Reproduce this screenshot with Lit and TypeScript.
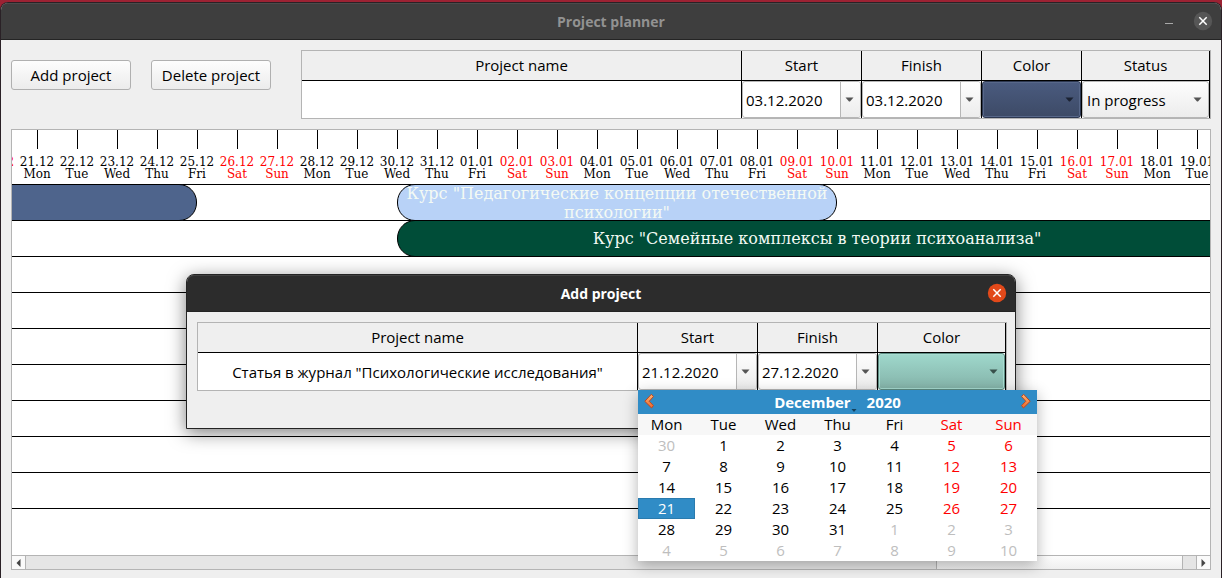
import { LitElement, html, css, nothing } from "lit";
import { customElement, property } from "lit/decorators.js";
import { classMap } from "lit/directives/class-map.js";

const controls = css`
  * {
    box-sizing: border-box;
  }
  button,
  input,
  select {
    font: inherit;
    color: inherit;
    margin: 0;
    padding: 0;
    border: 0;
    border-radius: 0;
    background: none;
    appearance: none;
    outline: none;
  }
`;

const caret = html`<svg class="caret" width="9" height="5" viewBox="0 0 9 5" aria-hidden="true">
  <path d="M0.5 0.5h8L5 4.6H4z" fill="currentColor" />
</svg>`;

const cross = html`<svg width="20" height="20" viewBox="0 0 20 20" aria-hidden="true">
  <circle class="disc" cx="10" cy="10" r="9.2" />
  <path d="M6.3 6.3l7.4 7.4M13.7 6.3l-7.4 7.4" stroke="#fff" stroke-width="1.5" />
</svg>`;

@customElement("month-popup")
export class MonthPopup extends LitElement {
  @property({ type: Number }) selected = 21;

  static styles = [
    controls,
    css`
      :host {
        display: block;
        width: 399px;
        background: #fff;
        box-shadow: 0 4px 14px rgba(0, 0, 0, 0.3);
        color: #000;
      }
      .nav {
        height: 24px;
        display: flex;
        align-items: center;
        justify-content: space-between;
        padding: 0 5px;
        background: #308cc6;
        color: #fff;
        font-weight: 700;
      }
      .step {
        display: flex;
      }
      .heading {
        display: flex;
        gap: 10px;
      }
      .month {
        display: flex;
        align-items: flex-end;
      }
      .mark {
        color: #15405c;
      }
      .days {
        width: 100%;
        table-layout: fixed;
        border-collapse: collapse;
      }
      th,
      td {
        height: 21px;
        padding: 0;
        text-align: center;
        font-weight: 400;
        line-height: 21px;
      }
      th {
        background: #f7f7f7;
      }
      .day {
        display: block;
        width: 100%;
        height: 21px;
        line-height: 21px;
      }
      .weekend {
        color: #f00;
      }
      .outside {
        color: #bebebe;
      }
      .picked {
        background: #308cc6;
        color: #fff;
        border: 1px solid #2a7bae;
        line-height: 19px;
      }
    `,
  ];

  render() {
    const names = ["Mon", "Tue", "Wed", "Thu", "Fri", "Sat", "Sun"];
    const first = new Date(2020, 10, 30);
    const weeks = Array.from({ length: 6 }, (_, w) =>
      names.map((_n, d) => new Date(first.getFullYear(), first.getMonth(), first.getDate() + w * 7 + d))
    );
    const chevron = (d: string) => html`<svg width="12" height="18" viewBox="0 0 12 18" aria-hidden="true">
      <defs>
        <linearGradient id="amber" x1="0" y1="0" x2="0" y2="1">
          <stop offset="0" stop-color="#fbb777" />
          <stop offset="1" stop-color="#f0672a" />
        </linearGradient>
      </defs>
      <path d=${d} fill="url(#amber)" stroke="#c4461a" stroke-width="1" stroke-linejoin="round" />
    </svg>`;
    return html`
      <div class="nav">
        <button class="step" aria-label="Previous month">
          ${chevron("M8.4 1.3L10.4 3.6L6.2 8.3L10.4 12.6L8.6 15L1.8 8.3Z")}
        </button>
        <div class="heading">
          <button class="month">
            December<svg class="mark" width="6" height="3" viewBox="0 0 6 3" aria-hidden="true">
              <path d="M0.5 0h5L3 3z" fill="currentColor" />
            </svg>
          </button>
          <button>2020</button>
        </div>
        <button class="step" aria-label="Next month">
          ${chevron("M3.6 1.3L1.6 3.6L5.8 8.3L1.6 12.6L3.4 15L10.2 8.3Z")}
        </button>
      </div>
      <table class="days">
        <thead>
          <tr>
            ${names.map((n, i) => html`<th class=${i > 4 ? "weekend" : nothing}>${n}</th>`)}
          </tr>
        </thead>
        <tbody>
          ${weeks.map(
            (week) => html`<tr>
              ${week.map((date, i) => {
                const outside = date.getMonth() !== 11;
                return html`<td>
                  <button
                    class=${classMap({
                      day: true,
                      outside,
                      weekend: !outside && i > 4,
                      picked: !outside && date.getDate() === this.selected,
                    })}
                  >
                    ${date.getDate()}
                  </button>
                </td>`;
              })}
            </tr>`
          )}
        </tbody>
      </table>
    `;
  }
}

@customElement("project-form")
export class ProjectForm extends LitElement {
  @property() name = "";
  @property() start = "";
  @property() finish = "";
  @property() tone = "navy";
  @property() status = "";
  @property({ type: Boolean }) open = false;

  static styles = [
    controls,
    css`
      :host {
        display: block;
        border: 1px solid #b4b4b4;
        background: #efefef;
      }
      .grid {
        width: 100%;
        table-layout: fixed;
        border-collapse: separate;
        border-spacing: 0;
      }
      th,
      td {
        padding: 0;
        border-right: 1px solid #000;
      }
      th {
        height: 30px;
        padding-bottom: 2px;
        border-bottom: 1px solid #000;
        font-weight: 400;
        text-align: center;
      }
      td {
        position: relative;
        height: 37px;
        background: #fff;
      }
      .date {
        width: 120px;
      }
      .tint {
        width: 100px;
      }
      .last {
        width: 128px;
      }
      .name {
        display: block;
        width: 100%;
        height: 37px;
        text-align: center;
      }
      .picker,
      .choice {
        display: flex;
        height: 37px;
        border: 1px solid #b6b6b6;
        border-radius: 3px;
        overflow: hidden;
      }
      .value {
        flex: 1;
        min-width: 0;
        padding-left: 3px;
      }
      .drop {
        display: flex;
        align-items: center;
        justify-content: center;
        width: 20px;
        padding-right: 2px;
        border-left: 1px solid #b6b6b6;
        background: linear-gradient(#fdfdfd, #ececec);
        color: #555;
      }
      .choice {
        position: relative;
        align-items: center;
        background: linear-gradient(#fdfdfd, #ececec);
        color: #000;
      }
      .choice .caret {
        position: absolute;
        right: 6px;
        color: #555;
        pointer-events: none;
      }
      .list {
        width: 100%;
        height: 100%;
        padding-left: 4px;
      }
      .navy {
        background: linear-gradient(#4a5b7f, #3d4a66);
        border-color: #2c3750;
        box-shadow: inset 0 0 0 1px #576789;
      }
      .mint {
        background: linear-gradient(#9fd8cc, #84b3a9);
        border-color: #5d8c82;
        box-shadow: inset 0 0 0 1px #a8dcd1;
      }
      .navy .caret {
        color: #1b2232;
      }
      .mint .caret {
        color: #38504b;
      }
      month-popup {
        position: absolute;
        left: 0;
        top: 37px;
        z-index: 2;
      }
    `,
  ];

  private picker(label: string, value: string) {
    return html`<div class="picker">
      <input class="value" aria-label=${label} .value=${value} />
      <button class="drop" aria-label=${`Open ${label.toLowerCase()} calendar`}>${caret}</button>
    </div>`;
  }

  render() {
    return html`
      <table class="grid">
        <thead>
          <tr>
            <th>Project name</th>
            <th class="date">Start</th>
            <th class="date">Finish</th>
            <th class=${this.status ? "tint" : "last"}>Color</th>
            ${this.status ? html`<th class="last">Status</th>` : nothing}
          </tr>
        </thead>
        <tbody>
          <tr>
            <td><input class="name" aria-label="Project name" .value=${this.name} /></td>
            <td>
              ${this.picker("Start", this.start)} ${this.open ? html`<month-popup></month-popup>` : nothing}
            </td>
            <td>${this.picker("Finish", this.finish)}</td>
            <td>
              <div class="choice ${this.tone}">
                <select class="list" aria-label="Color">
                  <option></option>
                </select>
                ${caret}
              </div>
            </td>
            ${this.status
              ? html`<td>
                  <div class="choice">
                    <select class="list" aria-label="Status">
                      <option>${this.status}</option>
                    </select>
                    ${caret}
                  </div>
                </td>`
              : nothing}
          </tr>
        </tbody>
      </table>
    `;
  }
}

interface Bar {
  from: number;
  to: number;
  tone: string;
  title: string;
}

@customElement("project-timeline")
export class ProjectTimeline extends LitElement {
  static styles = [
    controls,
    css`
      :host {
        display: flex;
        flex-direction: column;
        border: 1px solid #b4b4b4;
        background: #fff;
        font-family: "DejaVu Serif", serif;
      }
      .canvas {
        flex: 1;
        overflow: hidden;
      }
      .scale {
        display: flex;
        height: 54px;
        margin-left: -75px;
      }
      .tick {
        flex: none;
        width: 40px;
        font-size: 12px;
        line-height: 12px;
        text-align: center;
        white-space: nowrap;
      }
      .tick::before {
        content: "";
        display: block;
        width: 1px;
        height: 19px;
        margin: 0 0 7px 20px;
        background: #000;
      }
      .weekend {
        color: #f00;
      }
      .lane {
        height: 36px;
        border-top: 1px solid #000;
      }
      .track {
        display: grid;
        grid-auto-columns: 40px;
        grid-auto-flow: column;
        height: 37px;
        margin: -1px 0 0 -55px;
      }
      .bar {
        display: flex;
        align-items: center;
        justify-content: center;
        grid-row: 1;
        height: 37px;
        border: 1px solid #000;
        border-radius: 18px;
        color: #f4faf4;
        font-size: 16px;
        line-height: 19px;
        text-align: center;
      }
      .slate {
        background: #4e648c;
      }
      .sky {
        background: #b8d2f7;
      }
      .forest {
        background: #004d38;
      }
      .scroll {
        display: flex;
        height: 14px;
        border-top: 1px solid #b4b4b4;
        background: #e5e5e5;
      }
      .arrow {
        display: flex;
        align-items: center;
        justify-content: center;
        width: 14px;
        background: #fafafa;
        color: #444;
      }
      .back {
        border-right: 1px solid #b4b4b4;
      }
      .forward {
        border-left: 1px solid #b4b4b4;
      }
      .rail {
        flex: 1;
        display: flex;
        justify-content: flex-end;
        padding-right: 13px;
      }
      .thumb {
        width: 247px;
        border: solid #b4b4b4;
        border-width: 0 1px;
        background: linear-gradient(#fcfcfc, #efefef);
      }
    `,
  ];

  private lanes: Bar[][] = [
    [
      { from: 1, to: 7, tone: "slate", title: "" },
      { from: 12, to: 23, tone: "sky", title: 'Курс "Педагогические концепции отечественной психологии"' },
    ],
    [{ from: 12, to: 33, tone: "forest", title: 'Курс "Семейные комплексы в теории психоанализа"' }],
    ...Array.from({ length: 8 }, () => [] as Bar[]),
  ];

  render() {
    const names = ["Sun", "Mon", "Tue", "Wed", "Thu", "Fri", "Sat"];
    const two = (n: number) => String(n).padStart(2, "0");
    const days = Array.from({ length: 32 }, (_, i) => new Date(2020, 11, 19 + i));
    return html`
      <div class="canvas">
        <div class="scale">
          ${days.map((d) => {
            const weekend = d.getDay() === 0 || d.getDay() === 6;
            return html`<div class=${classMap({ tick: true, weekend })}>
              ${two(d.getDate())}.${two(d.getMonth() + 1)}<br />${names[d.getDay()]}
            </div>`;
          })}
        </div>
        ${this.lanes.map(
          (bars) => html`<div class="lane">
            ${bars.length
              ? html`<div class="track">
                  ${bars.map(
                    (b) =>
                      html`<div class="bar ${b.tone}" style="grid-column: ${b.from} / ${b.to}">${b.title}</div>`
                  )}
                </div>`
              : nothing}
          </div>`
        )}
      </div>
      <div class="scroll">
        <button class="arrow back" aria-label="Scroll left">
          <svg width="5" height="8" viewBox="0 0 5 8"><path d="M4.5 0v8L0.5 4z" fill="currentColor" /></svg>
        </button>
        <div class="rail"><div class="thumb"></div></div>
        <button class="arrow forward" aria-label="Scroll right">
          <svg width="5" height="8" viewBox="0 0 5 8"><path d="M0.5 0v8L4.5 4z" fill="currentColor" /></svg>
        </button>
      </div>
    `;
  }
}

@customElement("app-root")
export class AppRoot extends LitElement {
  static styles = [
    controls,
    css`
      :host {
        display: flex;
        min-height: 100vh;
        box-sizing: border-box;
        padding-top: 2px;
        background: #9c2233;
        color: #000;
        font: 15px/20px "Open Sans", "Noto Sans", sans-serif;
        overflow: hidden;
      }
      .window {
        flex: 1;
        min-width: 0;
        display: flex;
        flex-direction: column;
        border: 1px solid #2a2126;
        border-bottom: 0;
        border-radius: 8px 8px 0 0;
        background: #efefef;
        overflow: hidden;
      }
      .titlebar {
        display: grid;
        grid-template-columns: 1fr auto 1fr;
        align-items: center;
        height: 37px;
        padding: 0 8px;
        border-bottom: 1px solid #242424;
        background: #3e3e3e;
        box-shadow: inset 0 1px #4b4b4b;
        color: #929292;
        font-size: 14px;
        font-weight: 700;
      }
      .caption {
        grid-column: 2;
        padding-top: 2px;
      }
      .actions {
        display: flex;
        justify-content: flex-end;
        gap: 14px;
      }
      .action {
        display: flex;
      }
      .disc {
        fill: #565656;
      }
      .body {
        flex: 1;
        display: flex;
        flex-direction: column;
        gap: 10px;
        padding: 10px 10px 8px;
      }
      .tools {
        display: flex;
        align-items: flex-start;
        gap: 30px;
      }
      .buttons {
        display: flex;
        gap: 20px;
        padding-top: 10px;
      }
      .push {
        width: 120px;
        height: 30px;
        border: 1px solid #b0b0b0;
        border-radius: 3px;
        background: linear-gradient(#fdfdfd, #ececec);
        white-space: nowrap;
      }
      .current,
      project-timeline {
        flex: 1;
      }
      .dialog {
        position: absolute;
        left: 186px;
        top: 274px;
        width: 830px;
        height: 155px;
        border: 1px solid #242424;
        border-radius: 8px 8px 0 0;
        background: #efefef;
        box-shadow: 0 4px 18px rgba(0, 0, 0, 0.5);
      }
      .dialog .titlebar {
        border-radius: 7px 7px 0 0;
        background: #2c2c2c;
        box-shadow: inset 0 1px #404040;
        color: #fff;
      }
      .dialog .disc {
        fill: #e2491a;
      }
      .fields {
        padding: 10px 8px 0 10px;
      }
    `,
  ];

  render() {
    return html`
      <main class="window">
        <header class="titlebar">
          <span class="caption">Project planner</span>
          <div class="actions">
            <button class="action" aria-label="Minimize">
              <svg width="20" height="20" viewBox="0 0 20 20"><path d="M6 12.5h8" stroke="#a8a8a8" /></svg>
            </button>
            <button class="action" aria-label="Close window">${cross}</button>
          </div>
        </header>
        <section class="body">
          <div class="tools">
            <div class="buttons">
              <button class="push">Add project</button>
              <button class="push">Delete project</button>
            </div>
            <project-form class="current" start="03.12.2020" finish="03.12.2020" status="In progress"></project-form>
          </div>
          <project-timeline></project-timeline>
        </section>
      </main>
      <div class="dialog" role="dialog" aria-label="Add project">
        <header class="titlebar">
          <span class="caption">Add project</span>
          <div class="actions"><button class="action" aria-label="Close dialog">${cross}</button></div>
        </header>
        <div class="fields">
          <project-form
            name='Статья в журнал "Психологические исследования"'
            start="21.12.2020"
            finish="27.12.2020"
            tone="mint"
            open
          ></project-form>
        </div>
      </div>
    `;
  }
}
